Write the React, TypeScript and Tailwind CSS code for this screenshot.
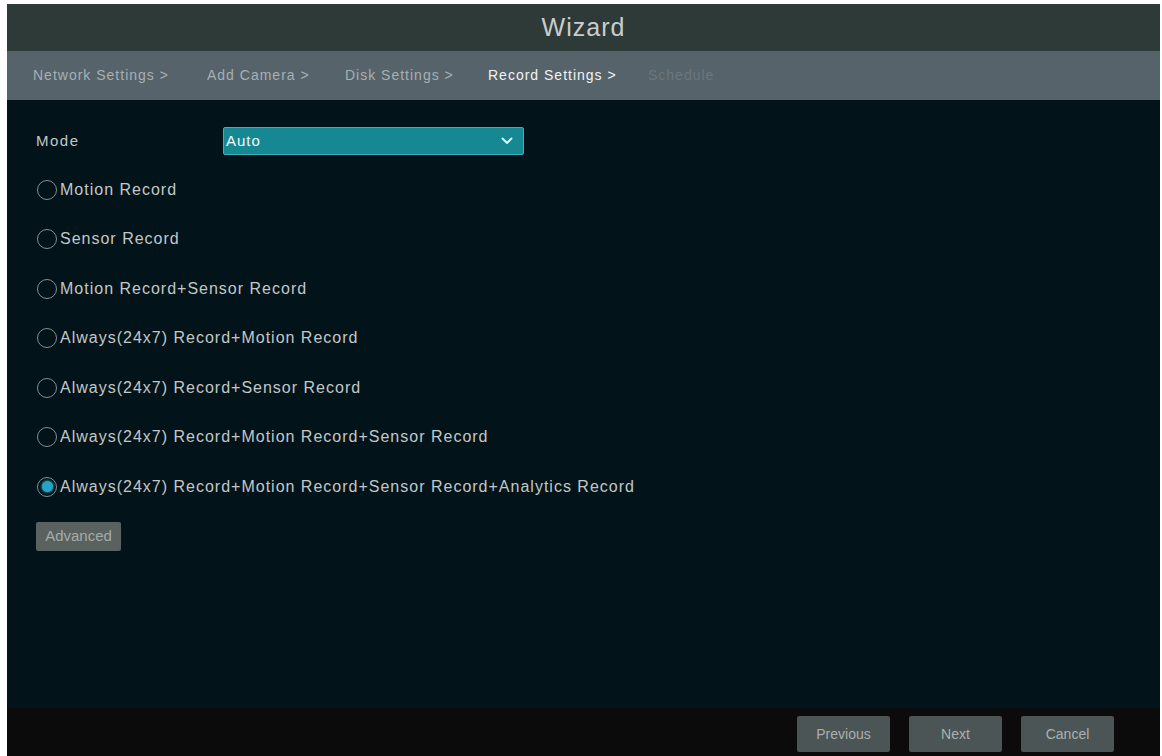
import React from "react";

const options = [
  "Motion Record",
  "Sensor Record",
  "Motion Record+Sensor Record",
  "Always(24x7) Record+Motion Record",
  "Always(24x7) Record+Sensor Record",
  "Always(24x7) Record+Motion Record+Sensor Record",
  "Always(24x7) Record+Motion Record+Sensor Record+Analytics Record",
];

function Radio({ checked }: { checked: boolean }) {
  return (
    <span className="flex h-[20px] w-[20px] shrink-0 items-center justify-center rounded-full border-[1.5px] border-[#858e8f]">
      {checked && <span className="h-[11px] w-[11px] rounded-full bg-[#27a3c8] shadow-[0_0_3px_#45c0e0]" />}
    </span>
  );
}

export default function App() {
  return (
    <div
      className="flex h-[756px] w-[1162px] flex-col bg-white pl-[7px] pr-[2px] pt-[4px]"
      style={{ fontFamily: '"Liberation Sans", Arial, sans-serif' }}
    >
      <div className="flex h-full flex-col bg-[#02141a]">
        <div className="flex h-[47px] items-center justify-center bg-[#2e3a38] text-[25px] tracking-[1px] text-[#c9cdcc]">
          Wizard
        </div>
        <div className="flex h-[49px] items-center bg-[#56636a] pl-[26px] text-[14px] tracking-[1px] text-[#a7b0b3]">
          <span className="w-[174px]">Network Settings &gt;</span>
          <span className="w-[138px]">Add Camera &gt;</span>
          <span className="w-[143px]">Disk Settings &gt;</span>
          <span className="w-[160px] text-[#f2f4f4]">Record Settings &gt;</span>
          <span className="text-[#6a777d]">Schedule</span>
        </div>
        <div className="flex flex-1 flex-col pl-[29px] pt-[27px]">
          <div className="flex h-[28px] items-center">
            <span className="w-[187px] text-[15px] tracking-[1.5px] text-[#c3c7c7]">Mode</span>
            <div className="flex h-[28px] w-[301px] items-center justify-between rounded-[2px] border border-[#3fb0b8] bg-[#168893] pl-[2px] pr-[10px] text-[15px] tracking-[1px] text-[#eef8f8]">
              <span>Auto</span>
              <svg width="12" height="8" viewBox="0 0 12 8" fill="none">
                <path d="M1.5 1.5 L6 6 L10.5 1.5" stroke="#d8f0f2" strokeWidth="2" strokeLinecap="round" strokeLinejoin="round" />
              </svg>
            </div>
          </div>
          <div className="mt-[10px] flex flex-col">
            {options.map((o, i) => (
              <div key={o} className="flex h-[49.5px] items-center pl-[1px]">
                <Radio checked={i === options.length - 1} />
                <span className="ml-[3px] text-[16px] tracking-[1px] text-[#c3c7c7]">{o}</span>
              </div>
            ))}
          </div>
          <div className="mt-[10px]">
            <div className="flex h-[29px] w-[85px] items-center justify-center rounded-[2px] bg-[#59625f] text-[15px] text-[#a5abab]">
              Advanced
            </div>
          </div>
        </div>
        <div className="flex h-[48px] items-start justify-end gap-[19px] bg-[#0b0b0b] pr-[46px] pt-[8px]">
          {["Previous", "Next", "Cancel"].map((b) => (
            <div
              key={b}
              className="flex h-[36px] w-[93px] items-center justify-center rounded-[2px] bg-[#4b5555] text-[14px] text-[#aab0b0]"
            >
              {b}
            </div>
          ))}
        </div>
      </div>
    </div>
  );
}
